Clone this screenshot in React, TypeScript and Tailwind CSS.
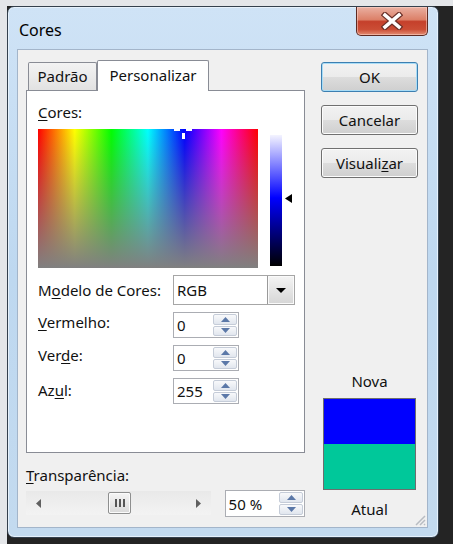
import React from 'react';

function SpinButtons() {
  return (
    <div className="flex w-[25px] flex-col gap-px py-px pr-px">
      <div className="flex flex-1 items-center justify-center rounded-[2px] border border-[#c5ccd8] bg-linear-to-b from-[#f8f9fb] to-[#e1e6ee]">
        <svg width="9" height="5" viewBox="0 0 9 5">
          <path d="M4.5 0 L9 5 L0 5Z" fill="#5b78a8" />
        </svg>
      </div>
      <div className="flex flex-1 items-center justify-center rounded-[2px] border border-[#c5ccd8] bg-linear-to-b from-[#f8f9fb] to-[#e1e6ee]">
        <svg width="9" height="5" viewBox="0 0 9 5">
          <path d="M0 0 L9 0 L4.5 5Z" fill="#5b78a8" />
        </svg>
      </div>
    </div>
  );
}

function Spin({ value, className }: { value: string; className: string }) {
  return (
    <div className={`flex border border-[#abadb3] bg-white ${className}`}>
      <div className="flex flex-1 items-center pl-[3px]">{value}</div>
      <SpinButtons />
    </div>
  );
}

function Button({ label, def }: { label: React.ReactNode; def?: boolean }) {
  return (
    <div
      className={`flex h-[30px] items-center justify-center rounded-[3px] border ${
        def ? 'border-[#3c7fb1] shadow-[inset_0_0_0_1px_#a8dcf6]' : 'border-[#707070] shadow-[inset_0_0_0_1px_#fcfcfc]'
      } bg-[linear-gradient(to_bottom,#f2f2f2_0%,#ebebeb_50%,#dddddd_50%,#cfcfcf_100%)]`}
    >
      {label}
    </div>
  );
}

export default function App() {
  return (
    <div className="h-[544px] w-[453px] overflow-hidden border-l-[7px] border-t-[6px] border-[#e4e6e9] bg-[#242424] font-['Noto_Sans',sans-serif] text-[15px] leading-[20px] text-[#111]">
      {/* window */}
      <div className="flex h-[532px] w-[432px] flex-col rounded-[7px] border border-[#34404d] bg-linear-to-b from-[#cfe3f6] via-[#bed8f0] to-[#c3daef] shadow-[inset_0_0_0_1px_#e6f1fb]">
        {/* title bar */}
        <div className="flex h-[42px] items-start">
          <div className="ml-[11px] mt-[12px] text-[16px] leading-[22px] text-black">Cores</div>
          <div className="ml-auto mr-[10px] flex h-[29px] w-[72px] items-center justify-center rounded-b-[5px] border border-t-0 border-[#5e2a22] bg-[linear-gradient(to_bottom,#eab0a2_0%,#dc8068_45%,#c5402b_52%,#cb4d35_80%,#e38d73_100%)] shadow-[inset_0_0_0_1px_rgba(255,220,210,0.5)]">
            <svg width="22" height="18" viewBox="0 0 22 18">
              <path d="M4 3 L18 15 M18 3 L4 15" stroke="#6b3028" strokeWidth="6" strokeLinecap="square" />
              <path d="M4 3 L18 15 M18 3 L4 15" stroke="#ffffff" strokeWidth="3.6" strokeLinecap="square" />
            </svg>
          </div>
        </div>

        {/* client area */}
        <div className="relative mx-[9px] flex h-[479px] w-[411px] border border-[#a3b5ca] bg-[#f0f0f0] pl-[8px] pt-[10px]">
          {/* left column */}
          <div className="flex w-[279px] flex-col">
            {/* tabs */}
            <div className="-mb-px flex h-[31px] items-end">
              <div className="ml-[2px] flex h-[29px] w-[69px] items-start justify-center rounded-t-[2px] border border-b-0 border-[#898c95] bg-linear-to-b from-[#f3f3f3] to-[#e1e1e1] pt-[3px]">
                Padrão
              </div>
              <div className="relative z-10 flex h-[31px] w-[112px] items-start justify-center rounded-t-[2px] border border-b-0 border-[#898c95] bg-white pt-[4px]">
                Personalizar
              </div>
            </div>

            {/* panel */}
            <div className="flex h-[363px] flex-col border border-[#898c95] bg-white pl-[11px] pt-[11px]">
              <div>
                <u className="underline-offset-2">C</u>ores:
              </div>
              <div className="mt-[7px] flex items-start">
                <div className="relative h-[139px] w-[220px] bg-[linear-gradient(to_bottom,rgba(128,128,128,0),#808080),linear-gradient(to_right,#ff0000,#ffff00,#00ff00,#00ffff,#0000ff,#ff00ff,#ff0000)]">
                  <div className="absolute left-[136px] top-0 h-[2px] w-[6px] bg-white" />
                  <div className="absolute left-[148px] top-0 h-[2px] w-[6px] bg-white" />
                  <div className="absolute left-[144px] top-[4px] h-[6px] w-[3px] bg-white" />
                </div>
                <div className="ml-[12px] mt-[6px] h-[131px] w-[12px] bg-[linear-gradient(to_bottom,#f4f4ff,#0000ff_48%,#000000)]" />
                <svg className="ml-[3px] mt-[65px]" width="7" height="9" viewBox="0 0 7 9">
                  <path d="M0 4.5 L7 0 L7 9Z" fill="#000" />
                </svg>
              </div>

              <div className="mt-[7px] grid grid-cols-[135px_auto] gap-y-[7px]">
                <div className="flex items-center">
                  M<u className="underline-offset-2">o</u>delo de Cores:
                </div>
                <div className="flex h-[30px] w-[122px] border border-[#a6a6a6] bg-white">
                  <div className="flex flex-1 items-center pl-[3px]">RGB</div>
                  <div className="flex w-[27px] items-center justify-center border-l border-[#9a9a9a] bg-linear-to-b from-[#f4f4f4] to-[#d6d6d6] shadow-[inset_0_0_0_1px_#fafafa]">
                    <svg width="10" height="5" viewBox="0 0 10 5">
                      <path d="M0 0 L10 0 L5 5Z" fill="#000" />
                    </svg>
                  </div>
                </div>

                <div>
                  <u className="underline-offset-2">V</u>ermelho:
                </div>
                <Spin value="0" className="h-[26px] w-[66px]" />

                <div>
                  Ver<u className="underline-offset-2">d</u>e:
                </div>
                <Spin value="0" className="h-[26px] w-[66px]" />

                <div className="pt-[2px]">
                  Az<u className="underline-offset-2">u</u>l:
                </div>
                <Spin value="255" className="h-[26px] w-[66px]" />
              </div>
            </div>

            {/* transparency */}
            <div className="mt-[12px]">
              <u className="underline-offset-2">T</u>ransparência:
            </div>
            <div className="mt-[5px] flex items-start">
              <div className="mt-px flex h-[24px] w-[186px] items-center bg-linear-to-b from-[#e9e9e9] to-[#f3f3f3]">
                <div className="flex w-[24px] justify-center">
                  <svg width="5" height="9" viewBox="0 0 5 9">
                    <path d="M5 0 L0 4.5 L5 9Z" fill="#606060" />
                  </svg>
                </div>
                <div className="flex flex-1 items-center pl-[58px]">
                  <div className="flex h-[22px] w-[23px] items-center justify-center gap-[2px] rounded-[2px] border border-[#8e8f8f] bg-linear-to-b from-[#f5f5f5] to-[#d9d9d9] shadow-[inset_0_0_0_1px_#fbfbfb]">
                    <div className="h-[8px] w-[2px] bg-[#555]" />
                    <div className="h-[8px] w-[2px] bg-[#555]" />
                    <div className="h-[8px] w-[2px] bg-[#555]" />
                  </div>
                </div>
                <div className="flex w-[24px] justify-center">
                  <svg width="5" height="9" viewBox="0 0 5 9">
                    <path d="M0 0 L5 4.5 L0 9Z" fill="#606060" />
                  </svg>
                </div>
              </div>
              <Spin value="50 %" className="ml-[14px] h-[27px] w-[81px]" />
            </div>
          </div>

          {/* right column */}
          <div className="ml-[16px] flex w-[97px] flex-col pb-[8px] pt-[2px]">
            <div className="flex flex-col gap-[13px]">
              <Button label="OK" def />
              <Button label="Cancelar" />
              <Button
                label={
                  <span>
                    Visuali<u className="underline-offset-2">z</u>ar
                  </span>
                }
              />
            </div>
            <div className="flex-1" />
            <div className="flex flex-col items-center">
              <div>Nova</div>
              <div className="mt-[7px] flex h-[92px] w-[93px] flex-col border border-[#6e6e6e]">
                <div className="h-[45px] bg-[#0000ff]" />
                <div className="flex-1 bg-[#00c89a]" />
              </div>
              <div className="mt-[9px]">Atual</div>
            </div>
          </div>

          {/* resize grip */}
          <svg className="absolute bottom-px right-px" width="12" height="12" viewBox="0 0 12 12">
            <path d="M11 2 L2 11 M11 6 L6 11 M11 10 L10 11" stroke="#b8bcc2" strokeWidth="1.5" />
          </svg>
        </div>
      </div>
    </div>
  );
}
